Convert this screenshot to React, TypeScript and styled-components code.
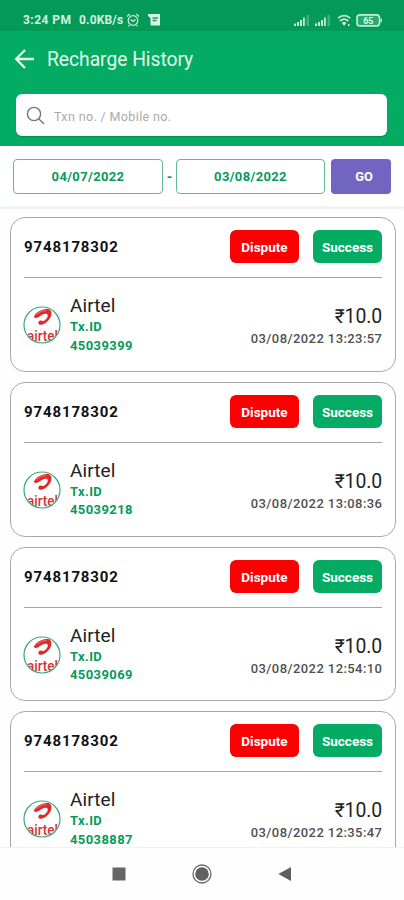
import React from "react";
import styled, { createGlobalStyle } from "styled-components";

const green = "#04ac63";

const GlobalStyle = createGlobalStyle`
  * { box-sizing: border-box; }
  body { margin: 0; background: #fff; font-family: Roboto, "Liberation Sans", sans-serif; }
`;

const Screen = styled.div`
  width: 404px;
  height: 900px;
  display: flex;
  flex-direction: column;
  overflow: hidden;
  background: #fefefe;
`;

const StatusBar = styled.div`
  height: 31px;
  flex: none;
  background: #039a57;
  display: flex;
  align-items: center;
  padding: 9px 21px 0 23px;
  color: #d2f2e1;
`;

const StatusText = styled.span<{ $width: number; $spacing: number }>`
  width: ${(p) => p.$width}px;
  font-size: 12px;
  line-height: 14px;
  font-weight: 700;
  letter-spacing: ${(p) => p.$spacing}px;
  white-space: nowrap;
`;

const StatusIcon = styled.svg<{ $gap?: number }>`
  display: block;
  flex: none;
  margin-left: ${(p) => p.$gap ?? 0}px;
`;

const StatusRight = styled.div`
  margin-left: auto;
  display: flex;
  align-items: center;
`;

const Header = styled.header`
  height: 115px;
  flex: none;
  background: ${green};
  padding: 0 17px 0 15px;
`;

const TitleRow = styled.div`
  height: 63px;
  display: flex;
  align-items: center;
  padding-bottom: 7px;
  gap: 12px;
`;

const Title = styled.h1`
  margin: 0;
  padding-top: 2px;
  font-size: 19.3px;
  line-height: 26px;
  font-weight: 400;
  letter-spacing: -0.04px;
  color: #e0f8eb;
  white-space: nowrap;
`;

const SearchBox = styled.div`
  height: 42px;
  margin-left: 1px;
  border-radius: 6px;
  background: #fff;
  box-shadow: 0 1px 1px #008a4c;
  display: flex;
  align-items: center;
  padding: 1px 10px 0;
  gap: 8px;
`;

const Placeholder = styled.span`
  padding-top: 1px;
  font-size: 12.5px;
  letter-spacing: 0.37px;
  color: #aaa;
`;

const FilterBar = styled.div`
  height: 61px;
  flex: none;
  background: #fff;
  border-bottom: 1px solid #f7f7f7;
  box-shadow: 0 2px 2px #eeeeee;
  padding: 13px 13px 0;
  display: flex;
`;

const DateField = styled.div<{ $width: number }>`
  width: ${(p) => p.$width}px;
  height: 35px;
  border: 1px solid #62b994;
  border-radius: 4px;
  color: #079a5c;
  font-size: 13px;
  font-weight: 700;
  letter-spacing: 0.35px;
  display: flex;
  align-items: center;
  justify-content: center;
`;

const Dash = styled.span`
  width: 13px;
  line-height: 36px;
  text-align: center;
  color: #079a5c;
  font-size: 14px;
  font-weight: 700;
`;

const GoButton = styled.button`
  width: 60px;
  height: 35px;
  margin-left: 6px;
  padding: 0 0 0 6px;
  border: 0;
  border-radius: 4px;
  background: #7265c1;
  color: #fff;
  font: 700 12.8px Roboto, sans-serif;
`;

const List = styled.main`
  flex: 1;
  min-height: 0;
  overflow: hidden;
  padding: 10px 8px 0 10px;
  display: flex;
  flex-direction: column;
  gap: 10px;
`;

const Card = styled.article`
  height: 154.75px;
  flex: none;
  border: 1px solid #a9a9a9;
  border-radius: 15px;
  background: #fff;
  padding: 0 13px;
`;

const CardHead = styled.div`
  height: 60px;
  border-bottom: 1px solid #a6a6a6;
  display: flex;
  align-items: center;
  padding-bottom: 2px;
`;

const Mobile = styled.span`
  font-size: 15px;
  font-weight: 700;
  letter-spacing: 0.87px;
  color: #111;
  margin-right: auto;
  padding-top: 1px;
`;

const Tag = styled.span<{ $color: string }>`
  width: 69px;
  height: 33px;
  margin-left: 14px;
  border-radius: 6px;
  background: ${(p) => p.$color};
  color: #fff;
  font-size: 13.5px;
  font-weight: 700;
  padding-top: 1px;
  display: flex;
  align-items: center;
  justify-content: center;
`;

const CardBody = styled.div`
  display: flex;
  padding-top: 16px;
`;

const Logo = styled.svg`
  display: block;
  margin: 12px 9px 0 -1px;
`;

const Operator = styled.div`
  font-size: 19px;
  line-height: 24px;
  letter-spacing: 0.1px;
  color: #222;
`;

const TxLine = styled.div`
  font-size: 13px;
  line-height: 18.5px;
  font-weight: 700;
  letter-spacing: 0.4px;
  color: #079a5c;
`;

const AmountBlock = styled.div`
  margin-left: auto;
  padding-top: 11px;
  text-align: right;
`;

const Amount = styled.div`
  font-size: 19.4px;
  line-height: 24px;
  letter-spacing: -0.1px;
  color: #222;
`;

const Stamp = styled.div`
  font-size: 13px;
  line-height: 20px;
  font-weight: 500;
  letter-spacing: 0.42px;
  margin-right: -0.4px;
  color: #505050;
`;

const NavBar = styled.nav`
  height: 53px;
  flex: none;
  background: #fefefe;
  border-top: 1px solid #f1f1f1;
  display: flex;
  align-items: center;
  padding-left: 112px;
`;

const NavIcon = styled.svg`
  display: block;
  flex: none;
  margin-right: 66px;
`;

const records = [
  { id: "45039399", time: "03/08/2022 13:23:57" },
  { id: "45039218", time: "03/08/2022 13:08:36" },
  { id: "45039069", time: "03/08/2022 12:54:10" },
  { id: "45038887", time: "03/08/2022 12:35:47" },
];

const SignalIcon = ({ gap }: { gap?: number }) => (
  <StatusIcon $gap={gap} width="16" height="12" viewBox="0 0 16 12" fill="#c4ecd8">
    <path d="M0 9.5h2V12H0zM3 8h2v4H3zM6 6h2v6H6zM9 3.500h1.800V12H9z" />
    <path d="M12.500 1H15v11h-2.500z" opacity=".3" />
  </StatusIcon>
);

const AirtelLogo = () => (
  <Logo width="38" height="38" viewBox="0 0 38 38">
    <defs>
      <clipPath id="disc">
        <circle cx="19" cy="19" r="17.800" />
      </clipPath>
    </defs>
    <circle cx="19" cy="19" r="18" fill="#fff" />
    <g clipPath="url(#disc)">
      <path
        d="M11 10.500C12.500 6.500 19 2.500 24.500 3c4.600.4 5 5.200 2.500 9.200-2.500 4-7.500 7.300-10.300 6.500-2.200-.7-1.400-3.500.4-4.100 1.500-.5 2 .8 3.400.3 2.300-.9 4.500-3.600 4.200-5.700-.3-2-3.200-1.700-5.900-.3-2.300 1.200-3.900 3-6 3-1.300 0-2-.6-1.800-1.400z"
        fill="#df292b"
      />
      <path d="M13.500 8.700c3-3 7.200-4.400 10-3.900" fill="none" stroke="#f0615e" strokeWidth="1.100" />
      <text
        x="19.500"
        y="34.500"
        textAnchor="middle"
        textLength="31"
        lengthAdjust="spacingAndGlyphs"
        fontFamily="Roboto, sans-serif"
        fontSize="14"
        fontWeight="500"
        fill="#d83236"
      >
        airtel
      </text>
    </g>
    <circle cx="19" cy="19" r="18" fill="none" stroke="#3ca67b" strokeWidth="1.200" />
  </Logo>
);

export default function App() {
  return (
    <Screen>
      <GlobalStyle />
      <StatusBar>
        <StatusText $width={56} $spacing={0.45}>3:24 PM</StatusText>
        <StatusText $width={47} $spacing={0.15}>0.0KB/s</StatusText>
        <StatusIcon width="14" height="14" viewBox="0 0 14 14" fill="none" stroke="currentColor" strokeWidth="1.200">
          <circle cx="7" cy="7.500" r="4.800" />
          <path d="M1 3.500 3.700 1M13 3.500 10.300 1M4.700 6.500 7 8.500l2.500-2M3.500 12l-1 1.300M10.500 12l1 1.300" />
        </StatusIcon>
        <StatusIcon $gap={8} width="13" height="14" viewBox="0 0 13 14">
          <path d="M0 1h12v11.500H2.500V5L0 3z" fill="#d9f5e6" />
          <path d="M4.500 5h5.500M4.500 7.500h4" stroke="#259765" strokeWidth="1.300" />
        </StatusIcon>
        <StatusRight>
          <SignalIcon />
          <SignalIcon gap={5} />
          <StatusIcon $gap={6} width="15" height="13" viewBox="0 0 15 13" fill="none" stroke="#c0ead5" strokeWidth="1.700">
            <path d="M1 4.200c3.600-3.400 8.800-3.400 12.200 0M3 7c2.500-2.300 5.800-2.300 8.300 0" />
            <path d="m4.800 8.800 2.300 3 2.300-3c-1.300-1.200-3.300-1.200-4.600 0zM11 10h1.500v2H11z" fill="#d9f5e6" stroke="none" />
          </StatusIcon>
          <StatusIcon $gap={4} width="27" height="13" viewBox="0 0 27 13">
            <rect x="1" y=".9" width="22.500" height="11" rx="3" fill="#25aa70" stroke="#c7edda" strokeWidth="1.600" />
            <path d="M24.500 4c2 .4 2 4.400 0 4.800z" fill="#c7edda" />
            <text x="12.300" y="9.800" textAnchor="middle" fontFamily="Roboto, sans-serif" fontSize="9" fontWeight="700" fill="#e3f8ed">
              65
            </text>
          </StatusIcon>
        </StatusRight>
      </StatusBar>

      <Header>
        <TitleRow>
          <svg width="20" height="20" viewBox="0 0 20 20" fill="none" stroke="#e8faf0" strokeWidth="2.300">
            <path d="M19 10H1.500M10 1 1.200 10l8.800 9" />
          </svg>
          <Title>Recharge History</Title>
        </TitleRow>
        <SearchBox>
          <svg width="20" height="20" viewBox="0 0 20 20" fill="none" stroke="#777" strokeWidth="1.400">
            <circle cx="8" cy="8" r="6.600" />
            <path d="m12.700 12.700 5.300 5.300" />
          </svg>
          <Placeholder>Txn no. / Mobile no.</Placeholder>
        </SearchBox>
      </Header>

      <FilterBar>
        <DateField $width={150}>04/07/2022</DateField>
        <Dash>-</Dash>
        <DateField $width={149}>03/08/2022</DateField>
        <GoButton>GO</GoButton>
      </FilterBar>

      <List>
        {records.map((record) => (
          <Card key={record.id}>
            <CardHead>
              <Mobile>9748178302</Mobile>
              <Tag $color="#fc0001">Dispute</Tag>
              <Tag $color={green}>Success</Tag>
            </CardHead>
            <CardBody>
              <AirtelLogo />
              <div>
                <Operator>Airtel</Operator>
                <TxLine>Tx.ID</TxLine>
                <TxLine>{record.id}</TxLine>
              </div>
              <AmountBlock>
                <Amount>₹10.0</Amount>
                <Stamp>{record.time}</Stamp>
              </AmountBlock>
            </CardBody>
          </Card>
        ))}
      </List>

      <NavBar>
        <NavIcon width="14" height="14" viewBox="0 0 14 14">
          <path d="M.5.500h13v13H.500z" fill="#666" />
        </NavIcon>
        <NavIcon width="20" height="20" viewBox="0 0 20 20">
          <circle cx="10" cy="10" r="9" fill="#fff" stroke="#666" strokeWidth="1.300" />
          <circle cx="10" cy="10" r="6.800" fill="#606060" />
        </NavIcon>
        <NavIcon width="14" height="14" viewBox="0 0 14 14">
          <path d="M.3 7 13 0v14z" fill="#606060" />
        </NavIcon>
      </NavBar>
    </Screen>
  );
}
